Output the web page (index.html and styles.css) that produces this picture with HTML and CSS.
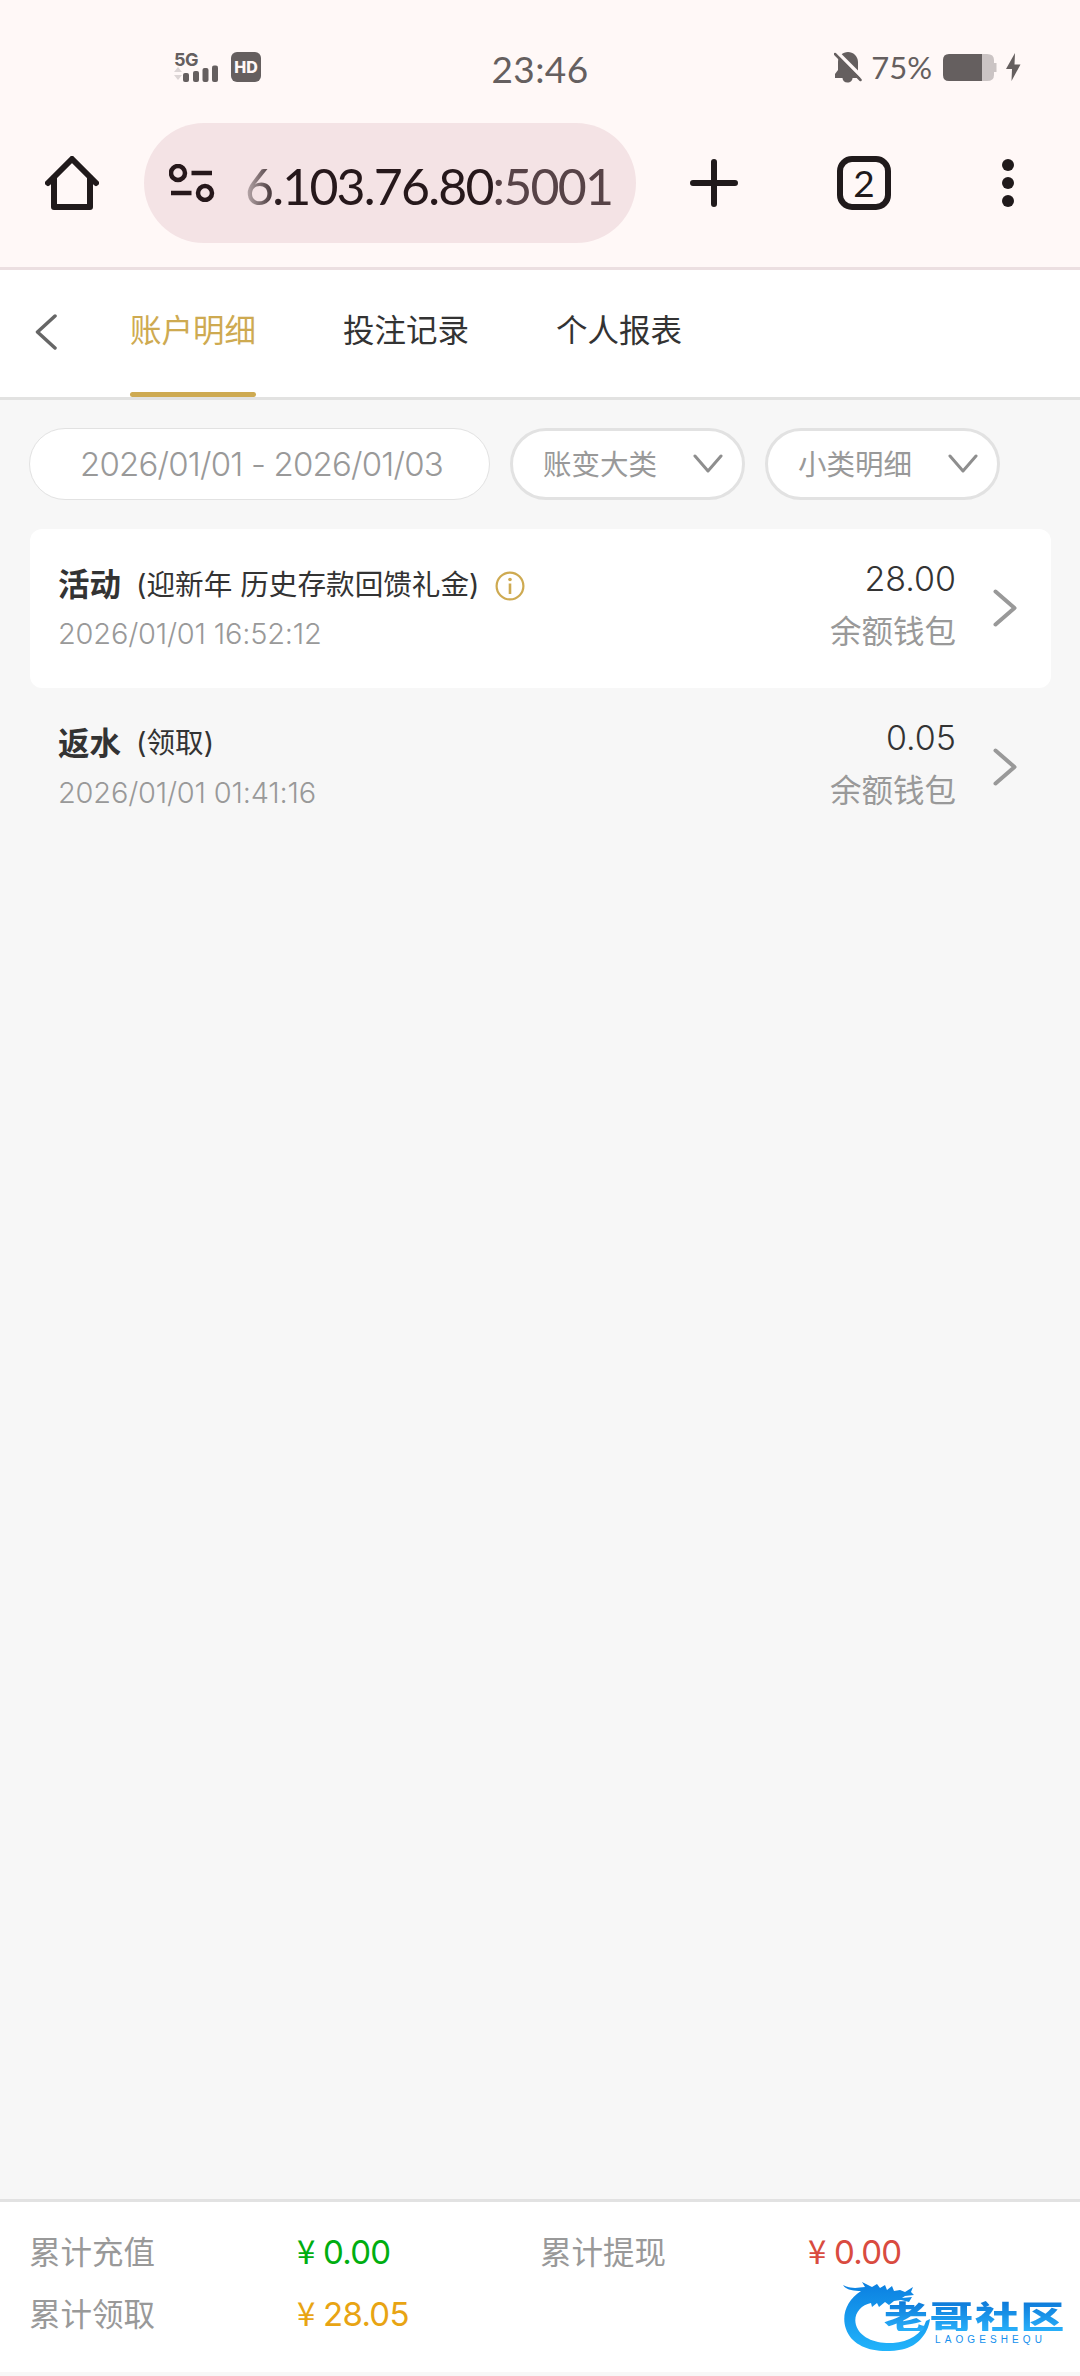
FILE: index.html
```html
<!DOCTYPE html>
<html lang="zh-CN">
<head>
    <meta charset="UTF-8">
    <meta name="viewport" content="width=device-width, initial-scale=1.0">
    <title>账户明细</title>
    <link rel="stylesheet" href="styles.css">
</head>
<body>
    <header class="browser">
        <div class="status-bar">
            <div class="status-left">
                <div class="signal">
                    <span class="network">5G</span>
                    <svg class="bars" width="44" height="17" viewBox="0 0 44 17">
                        <path d="M0 7l4-5 4 5zM0 10h8l-4 5z" fill="#dcd5d5"/>
                        <g fill="#655f5f">
                            <rect x="9" y="8" width="6" height="9" rx="2"/>
                            <rect x="19" y="6" width="6" height="11" rx="2"/>
                            <rect x="28.500" y="3" width="6" height="14" rx="2"/>
                            <rect x="38" y="0.500" width="6" height="16.500" rx="2"/>
                        </g>
                    </svg>
                </div>
                <span class="hd">HD</span>
            </div>
            <div class="time">23:46</div>
            <div class="status-right">
                <svg width="28" height="31" viewBox="0 0 28 31">
                    <path d="M14 0C19 0 24 4 24 10v12l3 4H1v-4l3-4v-8C4 4 9 0 14 0zM8.500 26h10c0 2.500-2 4.500-5 4.500s-5-2-5-4.500z" fill="#655f5f"/>
                    <path d="M3 0L29 26" stroke="#fff8f7" stroke-width="3.500"/>
                    <path d="M1 2L26.500 28" stroke="#655f5f" stroke-width="2.500" stroke-linecap="round"/>
                </svg>
                <span class="percent">75%</span>
                <svg class="battery" width="54" height="27" viewBox="0 0 54 27">
                    <path d="M6 0H44q7 0 7 6v3h2.500v9H51v3q0 6-7 6H6z" fill="#cbc4c4"/>
                    <path d="M6 0H39V27H6q-6 0-6-6V6q0-6 6-6z" fill="#655f5f"/>
                </svg>
                <svg class="bolt" width="15" height="28" viewBox="0 0 15 28">
                    <path d="M9 0L0 16h6L5.500 28 14.500 11.500H8.500z" fill="#655f5f"/>
                </svg>
            </div>
        </div>
        <div class="toolbar">
            <svg class="home" width="54" height="54" viewBox="0 0 54 54" fill="none" stroke="#201a1b" stroke-width="6" stroke-linecap="round" stroke-linejoin="round">
                <path d="M3 27L27 3l24 24"/>
                <path d="M9 22v29h36V22"/>
            </svg>
            <div class="url">
                <svg width="46" height="38" viewBox="0 0 46 38" fill="none" stroke="#26181b">
                    <circle cx="9" cy="9" r="7" stroke-width="4.500"/>
                    <circle cx="36" cy="29" r="7" stroke-width="4.500"/>
                    <path d="M22.500 9H43M2 29h20.500" stroke-width="4.500"/>
                </svg>
                <span class="address">6.103.76.80<span class="port">:5001</span></span>
            </div>
            <svg class="plus" width="48" height="48" viewBox="0 0 48 48" stroke="#201a1b" stroke-width="6" stroke-linecap="round">
                <path d="M24 3v42M3 24h42"/>
            </svg>
            <div class="tab-count">2</div>
            <svg class="menu" width="12" height="48" viewBox="0 0 12 48" fill="#201a1b">
                <circle cx="6" cy="6" r="6"/>
                <circle cx="6" cy="24" r="6"/>
                <circle cx="6" cy="42" r="6"/>
            </svg>
        </div>
    </header>

    <nav class="nav">
        <svg class="back" width="22" height="36" viewBox="0 0 22 36" fill="none" stroke="#666" stroke-width="3.500" stroke-linecap="round" stroke-linejoin="round">
            <path d="M20 2L2.500 18 20 34"/>
        </svg>
        <a class="tab active">账户明细</a>
        <a class="tab">投注记录</a>
        <a class="tab">个人报表</a>
    </nav>

    <main class="content">
        <div class="filters">
            <div class="filter date-filter">2026/01/01 - 2026/01/03</div>
            <div class="filter select-filter">
                <span>账变大类</span>
                <svg width="30" height="20" viewBox="0 0 30 20" fill="none" stroke="#8e8e8e" stroke-width="3" stroke-linecap="round" stroke-linejoin="round"><path d="M2 2l13 15L28 2"/></svg>
            </div>
            <div class="filter select-filter">
                <span>小类明细</span>
                <svg width="30" height="20" viewBox="0 0 30 20" fill="none" stroke="#8e8e8e" stroke-width="3" stroke-linecap="round" stroke-linejoin="round"><path d="M2 2l13 15L28 2"/></svg>
            </div>
        </div>

        <div class="record white">
            <div class="record-info">
                <div class="record-title">
                    <b>活动</b>
                    <span class="note">(迎新年 历史存款回馈礼金)</span>
                    <svg class="info-icon" width="30" height="30" viewBox="0 0 30 30">
                        <circle cx="15" cy="15" r="13.400" fill="none" stroke="#ceaa51" stroke-width="2.200"/>
                        <circle cx="15" cy="8.500" r="1.800" fill="#ceaa51"/>
                        <path d="M15 12.500v10.500" stroke="#ceaa51" stroke-width="2.600"/>
                    </svg>
                </div>
                <div class="record-date">2026/01/01 16:52:12</div>
            </div>
            <div class="record-amount">
                <div class="amount">28.00</div>
                <div class="wallet">余额钱包</div>
            </div>
            <svg class="arrow" width="24" height="38" viewBox="0 0 24 38" fill="none" stroke="#999" stroke-width="4" stroke-linecap="round" stroke-linejoin="round"><path d="M2.500 2.500L21.500 19 2.500 35.500"/></svg>
        </div>

        <div class="record">
            <div class="record-info">
                <div class="record-title">
                    <b>返水</b>
                    <span class="note">(领取)</span>
                </div>
                <div class="record-date">2026/01/01 01:41:16</div>
            </div>
            <div class="record-amount">
                <div class="amount">0.05</div>
                <div class="wallet">余额钱包</div>
            </div>
            <svg class="arrow" width="24" height="38" viewBox="0 0 24 38" fill="none" stroke="#999" stroke-width="4" stroke-linecap="round" stroke-linejoin="round"><path d="M2.500 2.500L21.500 19 2.500 35.500"/></svg>
        </div>
    </main>

    <footer class="totals">
        <span>累计充值</span>
        <span class="money green"><i>¥</i>0.00</span>
        <span>累计提现</span>
        <span class="money red"><i>¥</i>0.00</span>
        <span>累计领取</span>
        <span class="money yellow"><i>¥</i>28.05</span>
    </footer>

    <div class="watermark">
        <svg class="dragon" width="90" height="70" viewBox="0 0 90 70">
            <defs>
                <linearGradient id="blue" x1="0" y1="0" x2="0" y2="1">
                    <stop offset="0" stop-color="#0b7fe0"/>
                    <stop offset="1" stop-color="#22b4fb"/>
                </linearGradient>
            </defs>
            <path fill="url(#blue)" d="M0 4c8 4 14 3 22 2l-3-5 10 5 5-3 3 4 5-3 2 5 5-4 2 5 6-1 5 2 8-5-2 5 3 3-9 1-3 2 10-1-3 5-8-2-7 1-5 4-4-3-6 5-2-4-5 4-1-4C17 24 10 34 13 44c4 13 20 19 37 18 16-1 29-9 33-22l4-2C85 54 73 67 56 69 32 73 9 66 3 48-2 34 4 19 18 10 11 10 3 9 0 4z"/>
        </svg>
        <div class="wm-name">老哥社区</div>
        <div class="wm-latin">LAOGESHEQU</div>
    </div>
</body>
</html>
```

FILE: styles.css
```css
* {
    box-sizing: border-box;
}

body {
    margin: 0;
    width: 1080px;
    height: 2376px;
    display: flex;
    flex-direction: column;
    position: relative;
    overflow: hidden;
    background: #f7f7f7;
    color: #333;
    font-family: Inter, "Noto Sans CJK SC", sans-serif;
}

svg {
    display: block;
    flex-shrink: 0;
}

/* Status bar */
.browser {
    height: 270px;
    background: #fff8f7;
    border-bottom: 3px solid #ecdfe1;
}

.status-bar {
    height: 123px;
    padding: 14px 59px 0;
    display: flex;
    align-items: center;
    justify-content: space-between;
    color: #655f5f;
}

.status-left {
    display: flex;
    gap: 13px;
    width: 400px;
    padding-left: 115px;
    margin-top: -3px;
}

.signal {
    width: 44px;
    height: 30px;
}

.network {
    display: block;
    height: 13px;
    font-size: 18px;
    line-height: 15px;
    font-weight: 700;
    letter-spacing: -0.5px;
}

.hd {
    width: 30px;
    height: 30px;
    border-radius: 6px;
    background: #655f5f;
    color: #fff8f7;
    font-size: 16px;
    line-height: 30px;
    font-weight: 800;
    text-align: center;
}

.time {
    font-family: Lato, sans-serif;
    font-size: 37px;
    letter-spacing: 0.4px;
}

.status-right {
    width: 400px;
    display: flex;
    align-items: center;
    justify-content: flex-end;
    margin-top: -3px;
}

.percent {
    font-family: Lato, sans-serif;
    font-size: 31px;
    line-height: 30px;
    margin: 0 11px 0 9px;
}

.bolt {
    margin-left: 9px;
}

/* Toolbar */
.toolbar {
    height: 120px;
    padding-left: 45px;
    display: flex;
    align-items: center;
}

.url {
    width: 492px;
    height: 120px;
    margin-left: 45px;
    padding-left: 25px;
    border-radius: 60px;
    background: #f4e3e5;
    display: flex;
    align-items: center;
}

.address {
    margin: 6px 0 0 30px;
    font-family: Lato, sans-serif;
    font-size: 50px;
    letter-spacing: -1.8px;
    color: #26181b;
    white-space: nowrap;
    -webkit-mask-image: linear-gradient(90deg, rgba(0, 0, 0, 0.25), #000 34px);
    mask-image: linear-gradient(90deg, rgba(0, 0, 0, 0.25), #000 34px);
}

.port {
    color: #574347;
}

.plus {
    margin-left: 54px;
}

.tab-count {
    width: 54px;
    height: 54px;
    margin-left: 99px;
    border: 6px solid #201a1b;
    border-radius: 15px;
    font-family: Lato, sans-serif;
    font-size: 37px;
    line-height: 41px;
    text-align: center;
    color: #201a1b;
}

.menu {
    margin-left: 111px;
}

/* Page tabs */
.nav {
    height: 130px;
    padding-left: 35px;
    display: flex;
    background: #fff;
    border-bottom: 3px solid #e2e2e1;
}

.back {
    margin: 44px 73px 0 0;
}

.tab {
    width: 126px;
    margin-right: 87px;
    font-size: 31.5px;
    line-height: 122px;
    height: 127px;
    white-space: nowrap;
}

.tab.active {
    position: relative;
    color: #ceaa51;
}

.tab.active::after {
    content: "";
    position: absolute;
    left: 0;
    bottom: 0;
    width: 100%;
    height: 5px;
    border-radius: 3px;
    background: #ceaa51;
}

/* Filters */
.content {
    flex: 1;
    padding: 28px 29px 0;
}

.filters {
    display: flex;
    gap: 20px;
    margin-bottom: 29px;
}

.filter {
    height: 72px;
    border-radius: 36px;
    background: #fff;
    color: #999;
    display: flex;
    align-items: center;
}

.date-filter {
    width: 461px;
    border: 1px solid #e2e2e2;
    justify-content: center;
    padding-left: 4px;
    font-size: 33px;
    font-weight: 350;
    letter-spacing: -0.8px;
    white-space: nowrap;
}

.select-filter {
    width: 235px;
    border: 3px solid #e2e2e2;
    padding: 0 19px 0 30px;
    justify-content: space-between;
    font-size: 28.5px;
}

.select-filter span {
    padding-bottom: 4px;
}

/* Records */
.record {
    height: 158.5px;
    margin-left: 1px;
    padding: 0 34px 0 28px;
    display: flex;
    border-radius: 12px;
}

.record.white {
    background: #fff;
}

.record-info {
    flex: 1;
    padding-top: 30px;
}

.record-title {
    height: 46px;
    display: flex;
    align-items: center;
    white-space: nowrap;
}

.record-title b {
    font-size: 31.5px;
}

.note {
    margin-left: 15px;
    font-size: 28.6px;
}

.info-icon {
    margin: 7px 0 0 16px;
}

.record-date {
    margin-top: 11px;
    font-size: 29px;
    line-height: 36px;
    font-weight: 350;
    letter-spacing: -0.2px;
    color: #999;
}

.record-amount {
    padding-top: 28px;
    text-align: right;
}

.amount {
    font-size: 34px;
    font-weight: 350;
    line-height: 44px;
}

.wallet {
    font-size: 31.5px;
    line-height: 61px;
    color: #999;
}

.arrow {
    margin: 60px 0 0 37px;
}

/* Totals */
.totals {
    height: 173px;
    margin-bottom: 4px;
    padding: 17px 29px 0;
    display: grid;
    grid-template-columns: 268px 243px 268px 1fr;
    grid-auto-rows: 62px;
    align-items: center;
    background: #fff;
    border-top: 3px solid #e2e2e2;
    font-size: 31.5px;
    color: #999;
}

.money {
    font-size: 33px;
    letter-spacing: -0.7px;
    white-space: nowrap;
}

.money i {
    display: inline-block;
    width: 26px;
    font-family: "Noto Sans CJK SC", sans-serif;
    font-style: normal;
}

.green {
    color: #00ae10;
}

.red {
    color: #d94b40;
}

.yellow {
    color: #e8a413;
}

/* Community watermark */
.watermark {
    position: absolute;
    left: 843px;
    top: 2281px;
    width: 224px;
    height: 72px;
    color: #138fee;
}

.wm-name {
    position: absolute;
    left: 41px;
    top: 18px;
    font-family: "Noto Sans CJK SC", sans-serif;
    font-size: 32px;
    line-height: 32px;
    font-weight: 900;
    letter-spacing: 1.2px;
    white-space: nowrap;
    transform: scaleX(1.37);
    transform-origin: left;
    background: linear-gradient(#0b75d6, #28b0fa);
    -webkit-background-clip: text;
    background-clip: text;
    color: transparent;
}

.wm-latin {
    position: absolute;
    left: 92px;
    top: 54px;
    font-family: "Liberation Sans", Arial, sans-serif;
    font-size: 10px;
    line-height: 10px;
    letter-spacing: 4.1px;
}
```
